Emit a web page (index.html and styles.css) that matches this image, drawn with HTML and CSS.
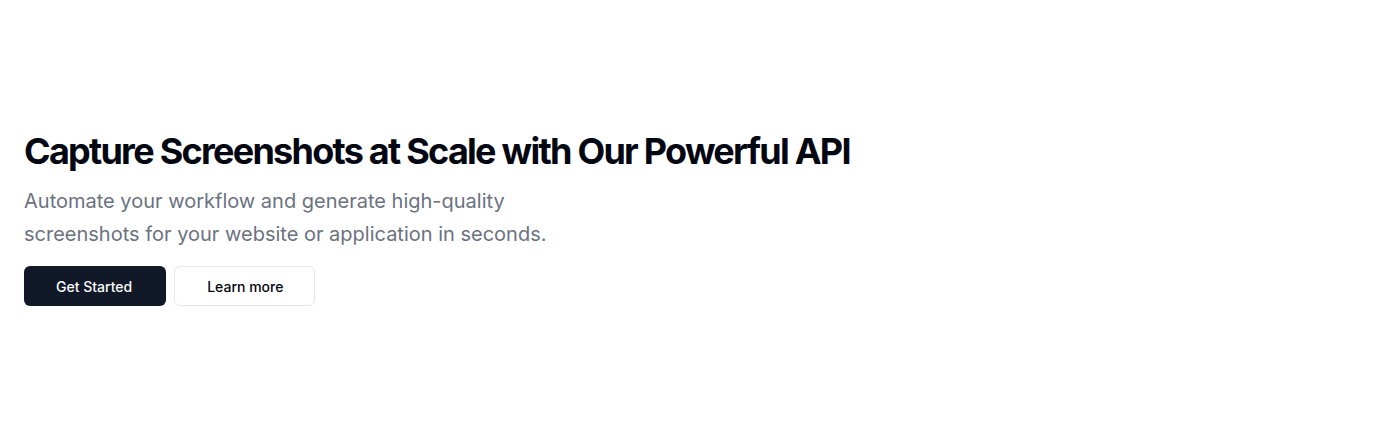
FILE: index.html
```html
<!DOCTYPE html>
<html lang="en">
<head>
<meta charset="utf-8">
<title>Screenshot API</title>
<link rel="stylesheet" href="styles.css">
</head>
<body>
<main class="hero">
  <div class="hero-content">
    <div class="hero-text">
      <h1 class="hero-title">Capture Screenshots at Scale with Our Powerful API</h1>
      <p class="hero-lead">Automate your workflow and generate high-quality screenshots for your website or application in seconds.</p>
    </div>
    <div class="hero-actions">
      <a class="btn btn-primary" href="#">Get Started</a>
      <a class="btn btn-outline" href="#">Learn more</a>
    </div>
  </div>
</main>
</body>
</html>
```
FILE: styles.css
```css
* { box-sizing: border-box; }
html, body { margin: 0; padding: 0; background: #fff; }
body {
  font-family: Inter, "Noto Sans", sans-serif;
  color: #030712;
  height: 434px;
}
.hero {
  padding: 133px 24px 0;
}
.hero-content {
  display: flex;
  flex-direction: column;
  gap: 16px;
}
.hero-text {
  display: flex;
  flex-direction: column;
  gap: 16px;
}
.hero-title {
  margin: 0;
  font-size: 36px;
  line-height: 1;
  font-weight: 700;
  letter-spacing: -1.74px;
  color: #030712;
}
.hero-lead {
  margin: 0;
  max-width: 600px;
  font-size: 20px;
  line-height: 1.625;
  color: #6b7280;
}
.hero-actions {
  display: flex;
  gap: 8px;
}
.btn {
  display: inline-flex;
  align-items: center;
  justify-content: center;
  height: 40px;
  padding: 0 32px;
  border-radius: 6px;
  font-size: 14px;
  font-weight: 500;
  text-decoration: none;
}
.btn-primary {
  background: #111827;
  color: #f9fafb;
  padding-right: 34px;
}
.btn-outline {
  background: #fff;
  color: #030712;
  border: 1px solid #e5e7eb;
  padding-right: 31px;
}
```
